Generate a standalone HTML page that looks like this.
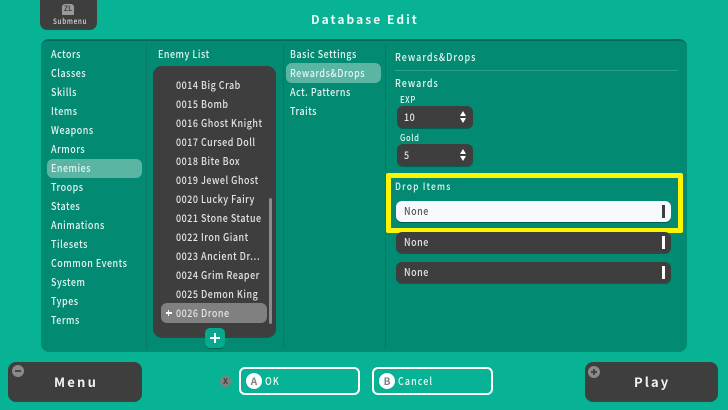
<!DOCTYPE html>
<html><head><meta charset="utf-8">
<style>
html,body{margin:0;padding:0}
body{width:728px;height:410px;overflow:hidden;background:#07b295;position:relative;font-family:"Noto Sans CJK JP","Liberation Sans",sans-serif;font-weight:500}
div{position:absolute;box-sizing:border-box}
.t{white-space:nowrap;font-size:10.5px;line-height:14px;height:14px;letter-spacing:.62px;color:#e6f5f1;transform:scaleX(.85);transform-origin:0 50%;margin-top:1px}
[style*="font-size"]{margin-top:0}
.n{transform:none}
.w{color:#e4e4e4}
.sep{top:45px;height:304px;width:1px;background:#067a66}
.dark{background:#3e3e3e;border-radius:6px;box-shadow:0 1px 0 #036052}
.bar{width:3px;height:13px;background:#fff;left:662px}
.circ{border-radius:50%;background:#8a8a8a;text-align:center;color:#444;font-weight:700}
.ab{width:16px;height:16px;border-radius:50%;background:#fff;color:#808080;font-size:10px;line-height:16px;text-align:center;font-weight:700;top:373px}
.btn{top:367px;height:28px;border:2px solid #fff;border-radius:6px}
</style></head><body>

<div class="dark" style="left:40px;top:-6px;width:57px;height:35px;border-radius:7px"></div>
<div style="left:62px;top:4px;width:12px;height:11px;background:#999;border-radius:3px 3px 1px 1px;font-size:7px;line-height:11px;color:#444;text-align:center;font-weight:700">ZL</div>
<div class="t" style="left:53px;top:15px;font-size:7.5px;letter-spacing:.8px;color:#ddd">Submenu</div>

<div class="t n" style="left:311px;top:11px;font-size:12px;line-height:17px;height:17px;letter-spacing:2.05px;color:#f0f8f6;font-weight:700">Database Edit</div>

<div style="left:41px;top:39px;width:646px;height:313px;background:#038a73;border-radius:8px;border-top:2px solid #056a5a"></div>
<div class="sep" style="left:146px"></div>
<div class="sep" style="left:283px"></div>
<div class="sep" style="left:385px"></div>

<div style="left:47px;top:159px;width:95px;height:19px;background:#5ab5a3;border-radius:6px"></div>
<div class="t" style="left:51px;top:47px">Actors</div>
<div class="t" style="left:51px;top:66px">Classes</div>
<div class="t" style="left:51px;top:85px">Skills</div>
<div class="t" style="left:51px;top:104px">Items</div>
<div class="t" style="left:51px;top:123px">Weapons</div>
<div class="t" style="left:51px;top:142px">Armors</div>
<div class="t" style="left:51px;top:161px">Enemies</div>
<div class="t" style="left:51px;top:180px">Troops</div>
<div class="t" style="left:51px;top:199px">States</div>
<div class="t" style="left:51px;top:218px">Animations</div>
<div class="t" style="left:51px;top:237px">Tilesets</div>
<div class="t" style="left:51px;top:256px">Common Events</div>
<div class="t" style="left:51px;top:275px">System</div>
<div class="t" style="left:51px;top:294px">Types</div>
<div class="t" style="left:51px;top:313px">Terms</div>

<div class="t" style="left:158px;top:47px">Enemy List</div>
<div class="dark" style="left:153px;top:66px;width:123px;height:271px;border-radius:9px"></div>
<div style="left:161px;top:303px;width:106px;height:20px;background:#808080;border-radius:6px"></div>
<div style="left:269px;top:198px;width:3px;height:126px;background:#8c8c8c;border-radius:2px"></div>
<div class="t w" style="left:176px;top:78px">0014 Big Crab</div>
<div class="t w" style="left:176px;top:97px">0015 Bomb</div>
<div class="t w" style="left:176px;top:116px">0016 Ghost Knight</div>
<div class="t w" style="left:176px;top:135px">0017 Cursed Doll</div>
<div class="t w" style="left:176px;top:154px">0018 Bite Box</div>
<div class="t w" style="left:176px;top:173px">0019 Jewel Ghost</div>
<div class="t w" style="left:176px;top:192px">0020 Lucky Fairy</div>
<div class="t w" style="left:176px;top:211px">0021 Stone Statue</div>
<div class="t w" style="left:176px;top:230px">0022 Iron Giant</div>
<div class="t w" style="left:176px;top:249px">0023 Ancient Dr⋯</div>
<div class="t w" style="left:176px;top:268px">0024 Grim Reaper</div>
<div class="t w" style="left:176px;top:287px">0025 Demon King</div>
<div class="t w" style="left:176px;top:306px">0026 Drone</div>
<div style="left:165.5px;top:312.2px;width:6px;height:1.8px;background:#fff"></div>
<div style="left:167.6px;top:310.2px;width:1.8px;height:6px;background:#fff"></div>

<div style="left:205px;top:328px;width:20px;height:20px;background:#07a98e;border-radius:5px;box-shadow:0 1px 0 #056a5a"></div>
<div style="left:210px;top:336.5px;width:9.5px;height:2.5px;background:#fff"></div>
<div style="left:213.5px;top:333px;width:2.5px;height:9.5px;background:#fff"></div>

<div style="left:286px;top:63px;width:95px;height:20px;background:#5ab5a3;border-radius:6px"></div>
<div class="t" style="left:290px;top:47px">Basic Settings</div>
<div class="t" style="left:290px;top:66px">Rewards&amp;Drops</div>
<div class="t" style="left:290px;top:85px">Act. Patterns</div>
<div class="t" style="left:290px;top:104px">Traits</div>

<div class="t" style="left:395px;top:50px;letter-spacing:1.2px">Rewards&amp;Drops</div>
<div style="left:395px;top:70px;width:283px;height:1px;background:#2ba28f"></div>
<div class="t" style="left:395px;top:76px;letter-spacing:1.2px">Rewards</div>

<div class="t" style="left:400px;top:93px;font-size:9px;letter-spacing:.7px">EXP</div>
<div class="dark" style="left:397px;top:106px;width:76px;height:22px"></div>
<div class="t w" style="left:404px;top:110px">10</div>
<div style="left:460px;top:111px;width:0;height:0;border:3.5px solid transparent;border-top:0;border-bottom:5px solid #fff"></div>
<div style="left:460px;top:118px;width:0;height:0;border:3.5px solid transparent;border-bottom:0;border-top:5px solid #fff"></div>

<div class="t" style="left:400px;top:131px;font-size:9px;letter-spacing:.7px">Gold</div>
<div class="dark" style="left:397px;top:144px;width:76px;height:22px"></div>
<div class="t w" style="left:404px;top:148px">5</div>
<div style="left:460px;top:149px;width:0;height:0;border:3.5px solid transparent;border-top:0;border-bottom:5px solid #fff"></div>
<div style="left:460px;top:156px;width:0;height:0;border:3.5px solid transparent;border-bottom:0;border-top:5px solid #fff"></div>

<div style="left:386px;top:173px;width:297px;height:60px;border:5px solid #fdf400;border-radius:2px"></div>
<div class="t" style="left:395px;top:179px;font-size:10px;letter-spacing:1.4px">Drop Items</div>
<div style="left:396px;top:201px;width:275px;height:21px;background:#f6fafc;border-radius:6px;box-shadow:0 1px 0 #035c50"></div>
<div class="t" style="left:404px;top:204px;color:#555">None</div>
<div class="bar" style="top:205px;background:#3e3e3e"></div>

<div class="dark" style="left:396px;top:232px;width:275px;height:21px"></div>
<div class="t w" style="left:404px;top:235px">None</div>
<div class="bar" style="top:236px"></div>
<div class="dark" style="left:396px;top:262px;width:275px;height:21px"></div>
<div class="t w" style="left:404px;top:265px">None</div>
<div class="bar" style="top:266px"></div>

<div class="dark" style="left:8px;top:362px;width:134px;height:39px;border-radius:8px"></div>
<div class="circ" style="left:12px;top:365px;width:12px;height:12px"></div>
<div style="left:15px;top:370px;width:6px;height:2px;background:#444"></div>
<div class="t n" style="left:54px;top:372px;font-size:13px;line-height:19px;height:19px;letter-spacing:2.2px;color:#f2f2f2;font-weight:700">Menu</div>

<div class="dark" style="left:585px;top:362px;width:133px;height:39px;border-radius:8px"></div>
<div class="circ" style="left:588px;top:366px;width:12px;height:12px"></div>
<div style="left:591px;top:371px;width:6px;height:2px;background:#444"></div>
<div style="left:593px;top:369px;width:2px;height:6px;background:#444"></div>
<div class="t n" style="left:634px;top:372px;font-size:13px;line-height:19px;height:19px;letter-spacing:2.1px;color:#f2f2f2;font-weight:700">Play</div>

<div class="circ" style="left:220px;top:376px;width:11px;height:11px;font-size:8px;line-height:11px;background:#808080;color:#3e3e3e">X</div>

<div class="btn" style="left:239px;width:121px"></div>
<div class="ab" style="left:246px">A</div>
<div class="t" style="left:265px;top:374px;letter-spacing:1.4px;color:#eafaf6">OK</div>

<div class="btn" style="left:372px;width:121px"></div>
<div class="ab" style="left:379px">B</div>
<div class="t" style="left:398px;top:374px;letter-spacing:1.3px;color:#eafaf6">Cancel</div>

</body></html>
